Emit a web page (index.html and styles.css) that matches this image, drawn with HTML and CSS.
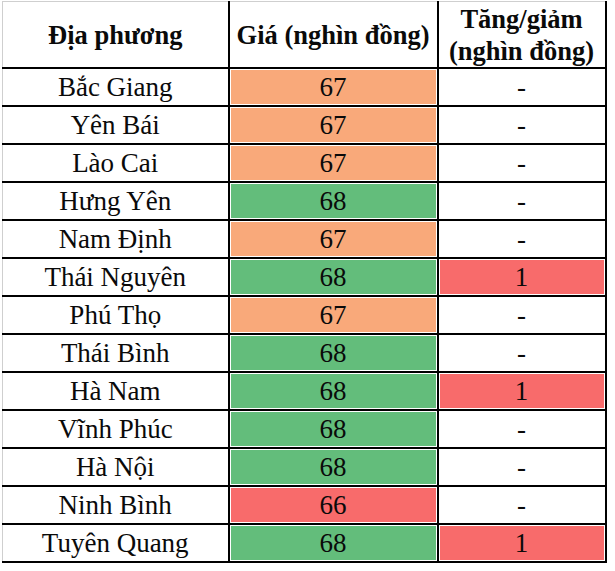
FILE: index.html
```html
<!DOCTYPE html>
<html lang="vi">
<head>
<meta charset="utf-8">
<title>Giá</title>
<link rel="stylesheet" href="styles.css">
</head>
<body>
<table class="price-table">
  <colgroup>
    <col class="c1"><col class="c2"><col class="c3">
  </colgroup>
  <thead>
    <tr class="head">
      <th>Địa phương</th>
      <th>Giá (nghìn đồng)</th>
      <th class="two">Tăng/giảm<br>(nghìn đồng)</th>
    </tr>
  </thead>
  <tbody>
    <tr><td>Bắc Giang</td><td class="or">67</td><td>-</td></tr>
    <tr><td>Yên Bái</td><td class="or">67</td><td>-</td></tr>
    <tr><td>Lào Cai</td><td class="or">67</td><td>-</td></tr>
    <tr><td>Hưng Yên</td><td class="gr">68</td><td>-</td></tr>
    <tr><td>Nam Định</td><td class="or">67</td><td>-</td></tr>
    <tr><td>Thái Nguyên</td><td class="gr">68</td><td class="rd">1</td></tr>
    <tr><td>Phú Thọ</td><td class="or">67</td><td>-</td></tr>
    <tr><td>Thái Bình</td><td class="gr">68</td><td>-</td></tr>
    <tr><td>Hà Nam</td><td class="gr">68</td><td class="rd">1</td></tr>
    <tr><td>Vĩnh Phúc</td><td class="gr">68</td><td>-</td></tr>
    <tr><td>Hà Nội</td><td class="gr">68</td><td>-</td></tr>
    <tr><td>Ninh Bình</td><td class="rd">66</td><td>-</td></tr>
    <tr><td>Tuyên Quang</td><td class="gr">68</td><td class="rd">1</td></tr>
  </tbody>
</table>
</body>
</html>
```
FILE: styles.css
```css
html, body {
  margin: 0;
  padding: 0;
  background: #fff;
}
body {
  padding: 1px 0 0 2px;
  color: #0a0a0a;
}
.price-table,
.price-table th,
.price-table td {
  font-family: "Liberation Serif", "Tinos", "Times New Roman", "DejaVu Serif", serif;
}
.price-table {
  border-collapse: collapse;
  table-layout: fixed;
  width: 603px;
  border-top: 1px solid #cfcfcf;
  border-left: 1px solid #cfcfcf;
  border-right: 2px solid #000;
  border-bottom: 2px solid #000;
}
.c1 { width: 226px; }
.c2 { width: 209px; }
.c3 { width: 168px; }
.price-table th,
.price-table td {
  border: 2px solid #000;
  text-align: center;
  vertical-align: middle;
  padding: 0;
}
.price-table tr:first-child th { border-top: 1px solid #cfcfcf; }
.price-table th:first-child,
.price-table td:first-child { border-left: 1px solid #cfcfcf; }
.head th {
  height: 65px;
  font-weight: bold;
  font-size: 26.5px;
  line-height: 32px;
}
.head th .one { position: relative; }
.price-table td {
  height: 36px;
  font-size: 27px;
  line-height: 30px;
}
.or, .gr, .rd { box-shadow: inset 0 0 0 1px #fff; }
.or { background: #f9a97a; }
.gr { background: #63bd7b; }
.rd { background: #f86b6b; }
```
